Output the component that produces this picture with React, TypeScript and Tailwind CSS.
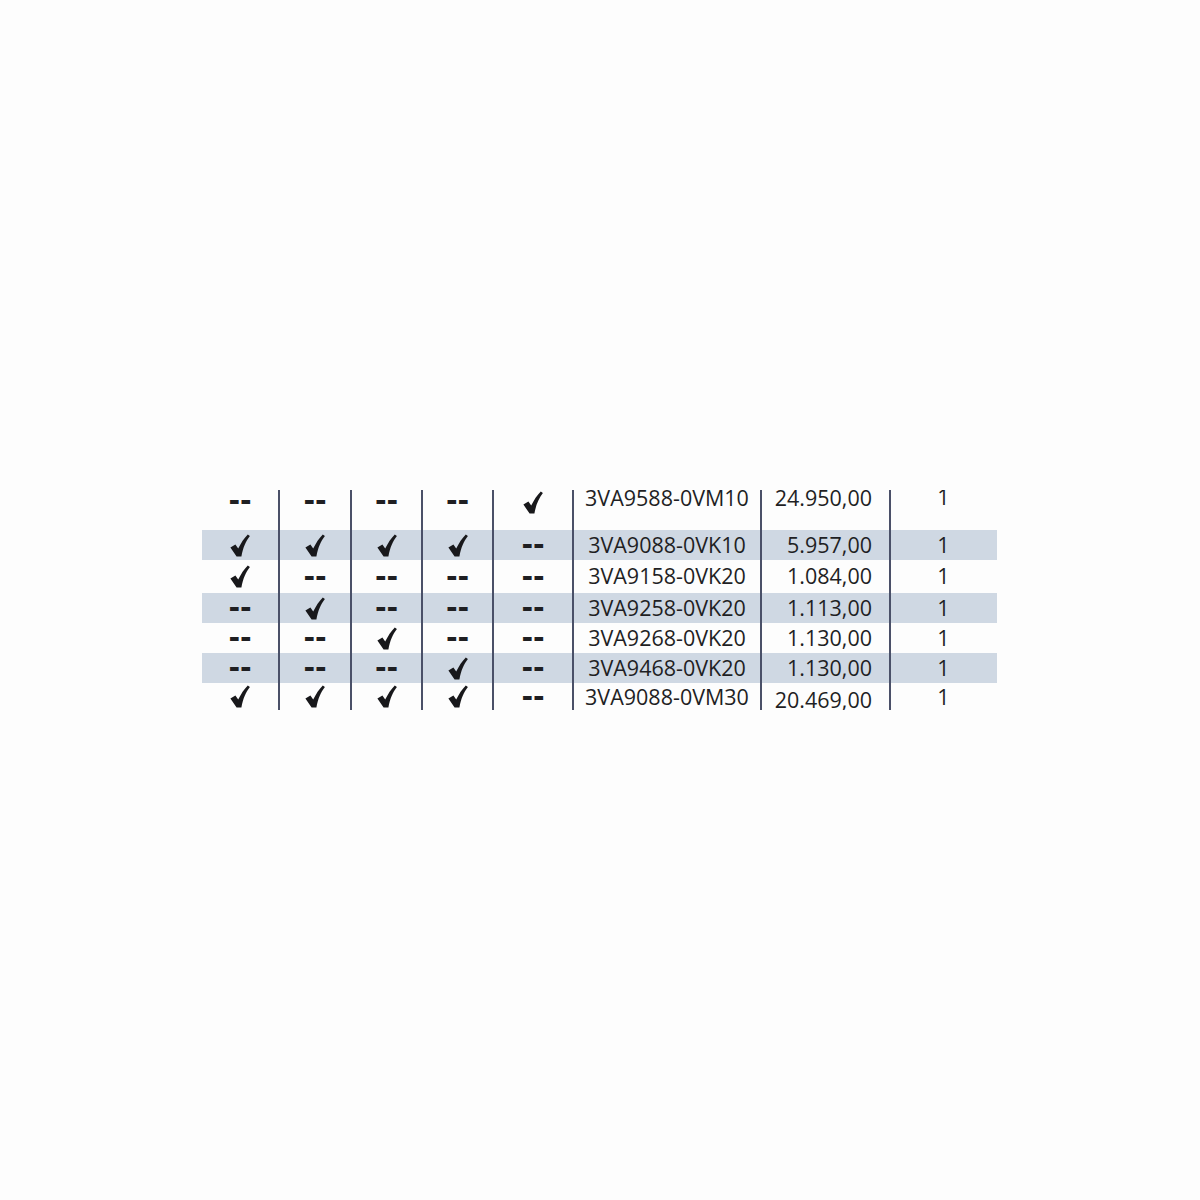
const ROWS: { flags: boolean[]; code: string; price: string; qty: string; shaded: boolean }[] = [
  { flags: [false, false, false, false, true], code: "3VA9588-0VM10", price: "24.950,00", qty: "1", shaded: false },
  { flags: [true, true, true, true, false], code: "3VA9088-0VK10", price: "5.957,00", qty: "1", shaded: true },
  { flags: [true, false, false, false, false], code: "3VA9158-0VK20", price: "1.084,00", qty: "1", shaded: false },
  { flags: [false, true, false, false, false], code: "3VA9258-0VK20", price: "1.113,00", qty: "1", shaded: true },
  { flags: [false, false, true, false, false], code: "3VA9268-0VK20", price: "1.130,00", qty: "1", shaded: false },
  { flags: [false, false, false, true, false], code: "3VA9468-0VK20", price: "1.130,00", qty: "1", shaded: true },
  { flags: [true, true, true, true, false], code: "3VA9088-0VM30", price: "20.469,00", qty: "1", shaded: false },
];

const ROW_H = ["h-[40px]", "h-[30px]", "h-[33px]", "h-[30px]", "h-[30px]", "h-[30px]", "h-[27px]"];
const TEXT_PAD = ["-mt-[4px]", "pt-[3px]", "pt-[4px]", "pt-[3px]", "pt-[3px]", "pt-[3px]", "pt-[2px]"];

function Check() {
  return (
    <svg width="20" height="23" viewBox="0 0 20 23" className="block">
      <path
        d="M0.4 13.6 L5.4 10.4 L8.2 14.6 C10.8 9 14.2 4 17.8 0.4 L19.9 2 C16 7 13 13.4 11.4 22.6 L6.6 22.6 Z"
        fill="#18181b"
      />
    </svg>
  );
}

function Dash() {
  return (
    <span className="block text-[28px] leading-none font-bold text-[#1f1f22] [font-family:'DejaVu_Sans',sans-serif]">
      --
    </span>
  );
}

const FLAG_W = ["w-[76px]", "w-[72px]", "w-[71px]", "w-[71px]", "w-[80px]"];

export default function App() {
  return (
    <div className="w-[1200px] h-[1200px] bg-[#fdfdfd] pt-[490px] pl-[202px]">
      <div className="w-[795px] flex flex-col text-[#1f1f24] [font-family:'Open_Sans',sans-serif]">
        {ROWS.map((row, r) => (
          <div key={r} className={`flex overflow-hidden ${ROW_H[r]} ${row.shaded ? "bg-[#cfd8e3]" : ""}`}>
            {row.flags.map((f, i) => (
              <div
                key={i}
                className={`${FLAG_W[i]} flex justify-center ${r === 0 ? "items-start" : "items-center"} ${i > 0 ? "border-l-2 border-[#4a5068]" : ""}`}
              >
                <div className={r === 0 ? (f ? "pt-[1px]" : "-mt-[3px]") : ""}>{f ? <Check /> : <Dash />}</div>
              </div>
            ))}
            <div className={`w-[188px] border-l-2 border-[#4a5068] flex justify-center text-[21.5px] leading-[24px] ${TEXT_PAD[r]}`}>
              <span>{row.code}</span>
            </div>
            <div className={`w-[129px] border-l-2 border-[#4a5068] flex justify-end pr-[17px] text-[21.5px] leading-[24px] ${TEXT_PAD[r]}`}>
              <span className={r === 6 ? "mt-[3px]" : ""}>{row.price}</span>
            </div>
            <div className={`w-[107px] border-l-2 border-[#4a5068] flex justify-center text-[21.5px] leading-[24px] ${TEXT_PAD[r]}`}>
              <span className={r === 0 ? "-mt-[1px]" : ""}>{row.qty}</span>
            </div>
          </div>
        ))}
      </div>
    </div>
  );
}
